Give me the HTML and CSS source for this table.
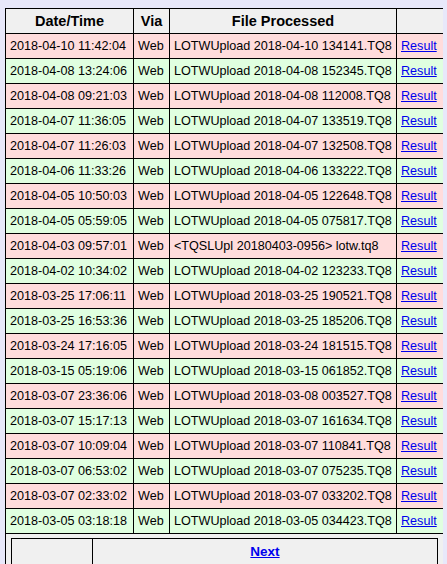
FILE: index.html
```
<!DOCTYPE html>
<html>
<head>
	<title>LoTW Upload History</title>
<link rel="stylesheet" href="styles.css">
</head>
<body>
	<table class="uploads">
		<colgroup>
			<col class="c-date">
			<col class="c-via">
			<col class="c-file">
			<col class="c-result">
		</colgroup>
		<tr class="head">
			<th>Date/Time</th>
			<th>Via</th>
			<th>File Processed</th>
			<th></th>
		</tr>
		<tr class="odd"><td>2018-04-10 11:42:04</td><td>Web</td><td>LOTWUpload 2018-04-10 134141.TQ8</td><td><a href="#">Result</a></td></tr>
		<tr class="even"><td>2018-04-08 13:24:06</td><td>Web</td><td>LOTWUpload 2018-04-08 152345.TQ8</td><td><a href="#">Result</a></td></tr>
		<tr class="odd"><td>2018-04-08 09:21:03</td><td>Web</td><td>LOTWUpload 2018-04-08 112008.TQ8</td><td><a href="#">Result</a></td></tr>
		<tr class="even"><td>2018-04-07 11:36:05</td><td>Web</td><td>LOTWUpload 2018-04-07 133519.TQ8</td><td><a href="#">Result</a></td></tr>
		<tr class="odd"><td>2018-04-07 11:26:03</td><td>Web</td><td>LOTWUpload 2018-04-07 132508.TQ8</td><td><a href="#">Result</a></td></tr>
		<tr class="even"><td>2018-04-06 11:33:26</td><td>Web</td><td>LOTWUpload 2018-04-06 133222.TQ8</td><td><a href="#">Result</a></td></tr>
		<tr class="odd"><td>2018-04-05 10:50:03</td><td>Web</td><td>LOTWUpload 2018-04-05 122648.TQ8</td><td><a href="#">Result</a></td></tr>
		<tr class="even"><td>2018-04-05 05:59:05</td><td>Web</td><td>LOTWUpload 2018-04-05 075817.TQ8</td><td><a href="#">Result</a></td></tr>
		<tr class="odd"><td>2018-04-03 09:57:01</td><td>Web</td><td>&lt;TQSLUpl 20180403-0956&gt; lotw.tq8</td><td><a href="#">Result</a></td></tr>
		<tr class="even"><td>2018-04-02 10:34:02</td><td>Web</td><td>LOTWUpload 2018-04-02 123233.TQ8</td><td><a href="#">Result</a></td></tr>
		<tr class="odd"><td>2018-03-25 17:06:11</td><td>Web</td><td>LOTWUpload 2018-03-25 190521.TQ8</td><td><a href="#">Result</a></td></tr>
		<tr class="even"><td>2018-03-25 16:53:36</td><td>Web</td><td>LOTWUpload 2018-03-25 185206.TQ8</td><td><a href="#">Result</a></td></tr>
		<tr class="odd"><td>2018-03-24 17:16:05</td><td>Web</td><td>LOTWUpload 2018-03-24 181515.TQ8</td><td><a href="#">Result</a></td></tr>
		<tr class="even"><td>2018-03-15 05:19:06</td><td>Web</td><td>LOTWUpload 2018-03-15 061852.TQ8</td><td><a href="#">Result</a></td></tr>
		<tr class="odd"><td>2018-03-07 23:36:06</td><td>Web</td><td>LOTWUpload 2018-03-08 003527.TQ8</td><td><a href="#">Result</a></td></tr>
		<tr class="even"><td>2018-03-07 15:17:13</td><td>Web</td><td>LOTWUpload 2018-03-07 161634.TQ8</td><td><a href="#">Result</a></td></tr>
		<tr class="odd"><td>2018-03-07 10:09:04</td><td>Web</td><td>LOTWUpload 2018-03-07 110841.TQ8</td><td><a href="#">Result</a></td></tr>
		<tr class="even"><td>2018-03-07 06:53:02</td><td>Web</td><td>LOTWUpload 2018-03-07 075235.TQ8</td><td><a href="#">Result</a></td></tr>
		<tr class="odd"><td>2018-03-07 02:33:02</td><td>Web</td><td>LOTWUpload 2018-03-07 033202.TQ8</td><td><a href="#">Result</a></td></tr>
		<tr class="even"><td>2018-03-05 03:18:18</td><td>Web</td><td>LOTWUpload 2018-03-05 034423.TQ8</td><td><a href="#">Result</a></td></tr>
		<tr class="foot">
			<td colspan="4">
				<table class="pager">
					<tr>
						<td class="prev"></td>
						<td class="next"><a href="#">Next</a></td>
					</tr>
				</table>
			</td>
		</tr>
	</table>
</body>
</html>
```

FILE: styles.css
```
body {
	background-color: #e8e8fa;
	font-family: "Liberation Sans", Arial, sans-serif;
	font-size: 12.6px;
	color: #000;
	margin: 8px 4px 0 5px;
}

.uploads {
	border-collapse: collapse;
	table-layout: fixed;
	width: 438px;
	background-color: #f0f0f0;
	font-size: 12.6px;
}

.c-date { width: 128px; }
.c-via { width: 36px; }
.c-file { width: 227px; }
.c-result { width: 47px; }

.uploads th,
.uploads td {
	border: 1px solid #000;
	padding: 4px 4px;
	line-height: 16px;
	white-space: nowrap;
	text-align: left;
}

.uploads th {
	text-align: center;
	font-weight: bold;
	font-size: 14.5px;
}

.odd td {
	background-color: #ffdcdc;
}

.even td {
	background-color: #e0ffe0;
}

a {
	color: #0000ee;
	text-decoration: underline;
}

.uploads .foot > td {
	padding: 4px 5px;
	background-color: #f0f0f0;
}

.pager {
	border-collapse: collapse;
	width: 100%;
	height: 28px;
}

.pager td {
	border: 1px solid #000;
	padding: 3px 4px;
}

.pager .prev {
	width: 72px;
}

.pager .next {
	text-align: center;
	font-weight: bold;
	font-size: 13.5px;
}
```
